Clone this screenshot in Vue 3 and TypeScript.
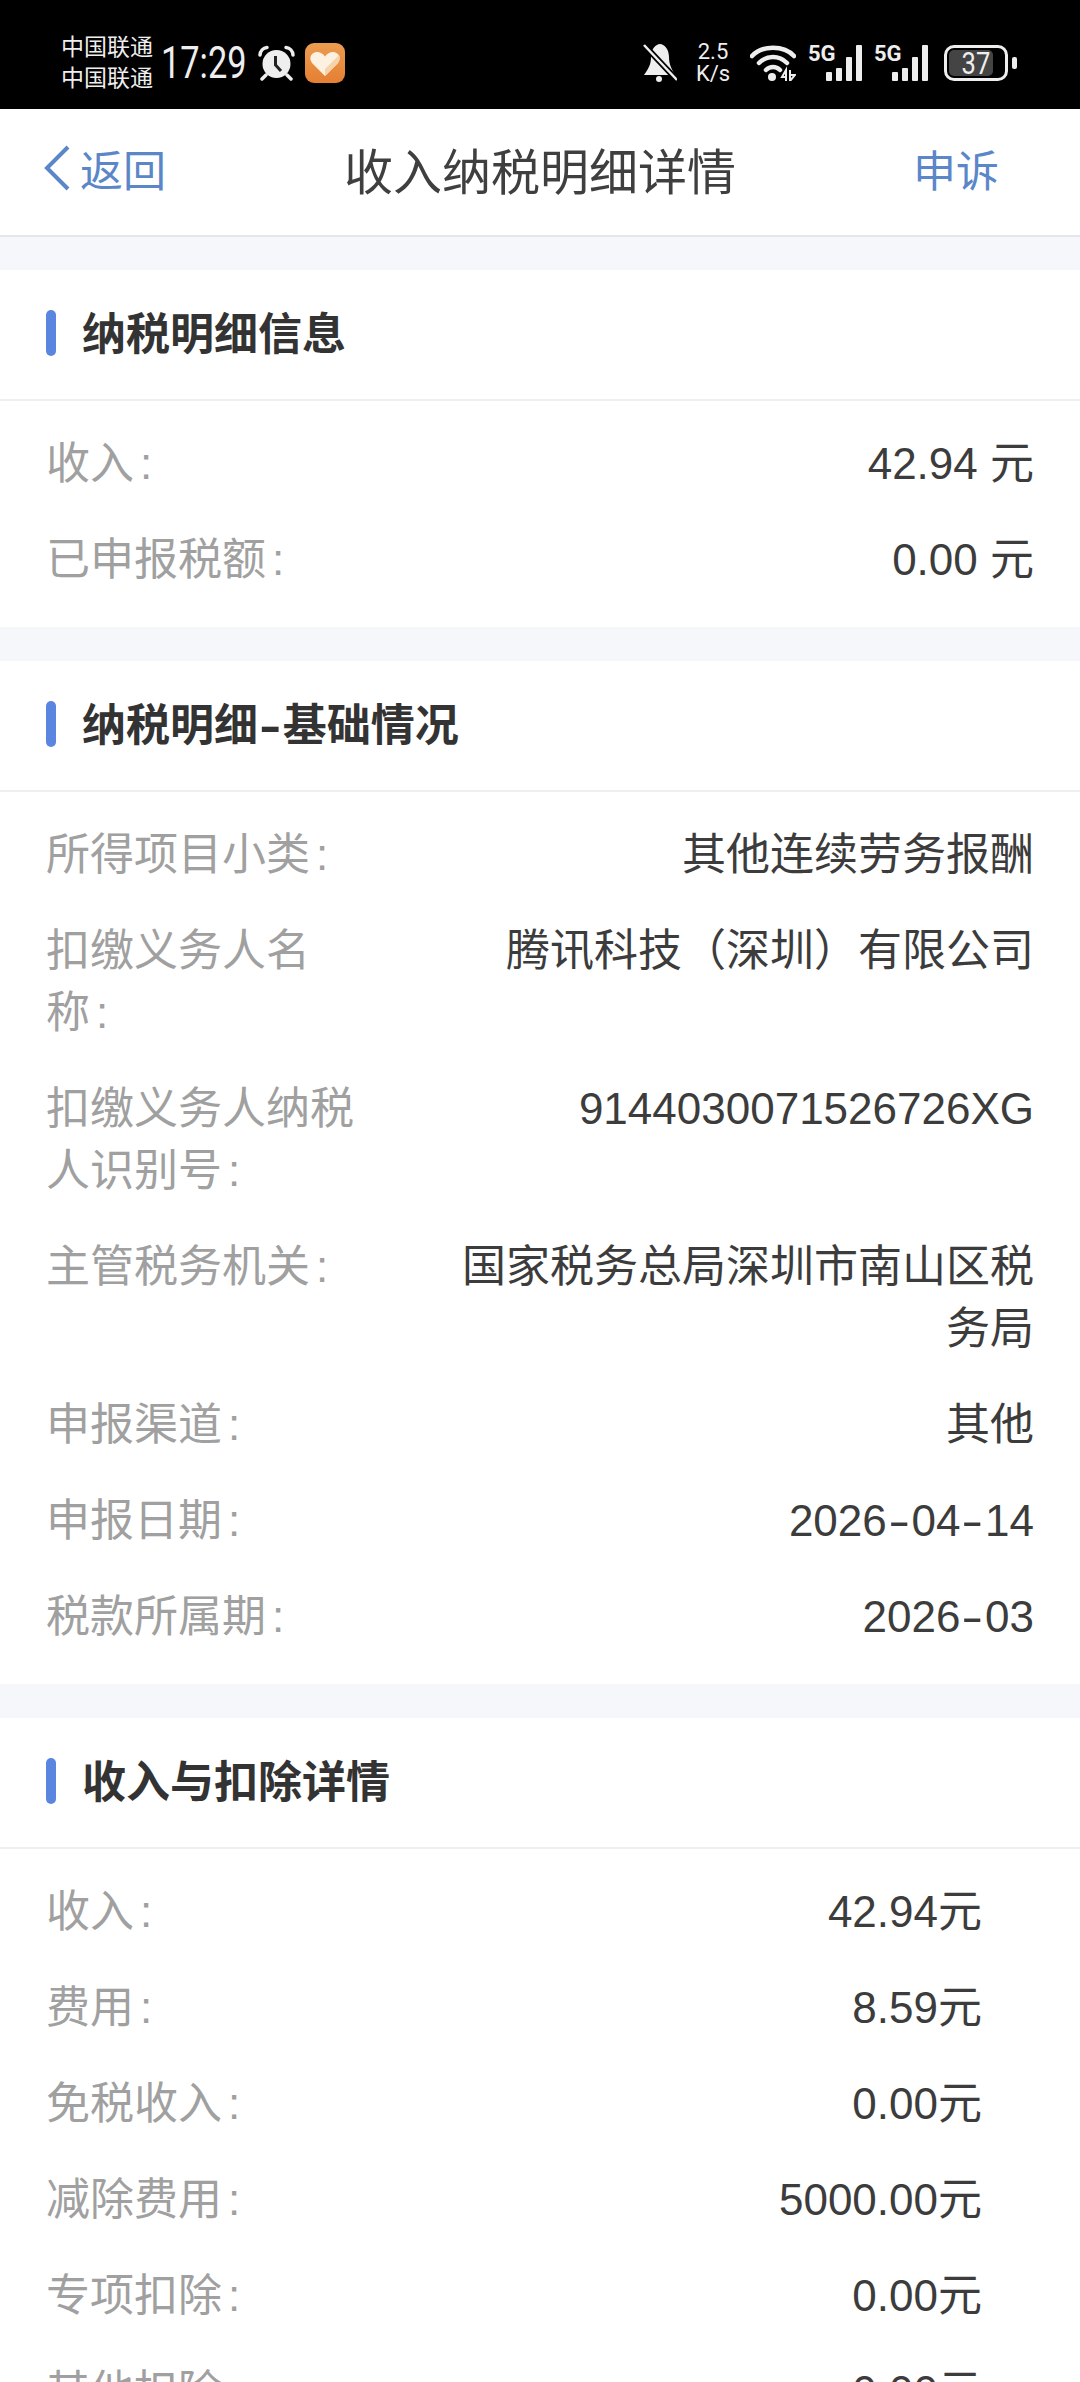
<template>
  <div class="page">
    <header class="status-bar">
      <div class="status-left">
        <div class="carrier">
          <span>中国联通</span>
          <span>中国联通</span>
        </div>
        <span class="clock"><span class="clock-text">17:29</span></span>
        <svg class="alarm" viewBox="0 0 37 36" width="37" height="36">
          <circle cx="18.500" cy="19" r="14" fill="#eee" />
          <path d="M2 10 A8 8 0 0 1 9 2.500 M35 10 A8 8 0 0 0 28 2.500" fill="none" stroke="#eee" stroke-width="3.500" stroke-linecap="round" />
          <path d="M8 30 L4 34 M29 30 L33 34" stroke="#eee" stroke-width="3.500" stroke-linecap="round" />
          <path d="M17.500 11 V20 L23 26" fill="none" stroke="#222" stroke-width="3" />
        </svg>
        <svg class="health" viewBox="0 0 40 40" width="40" height="40">
          <defs>
            <linearGradient id="hg" x1="0" y1="0" x2="0" y2="1">
              <stop offset="0" stop-color="#ec9c50" />
              <stop offset="1" stop-color="#e57f33" />
            </linearGradient>
          </defs>
          <rect width="40" height="40" rx="9" fill="url(#hg)" />
          <path d="M20 33 L7 20 C3 14 7 9 12 9 C15 9 18 10.500 20 13.500 C22 10.500 25 9 28 9 C33 9 37 14 33 20 Z" fill="#fdf1e2" />
          <path d="M20 33 L33 20 C35 17 35.500 14 34 12 L20 26 Z" fill="#f6d3a8" />
        </svg>
      </div>
      <div class="status-right">
        <svg class="bell" viewBox="0 0 34 40" width="34" height="40">
          <path d="M17 1 C13 1 8 6 8 14 C8 21 6 25 1 32 H32 C28 25 26 21 26 14 C26 6 21 1 17 1 Z" fill="#eee" />
          <circle cx="16" cy="36" r="3" fill="#eee" />
          <path d="M1 2 L34 37" stroke="#000" stroke-width="6" />
          <path d="M1 2 L34 37" stroke="#eee" stroke-width="2.500" />
        </svg>
        <div class="speed">
          <span>2.5</span>
          <span>K/s</span>
        </div>
        <svg class="wifi" viewBox="0 0 46 36" width="46" height="36">
          <path d="M2 11 C12 0 34 0 44 11 M9 18 C17 10 29 10 37 18 M16 25 C20 21 26 21 30 25" fill="none" stroke="#eee" stroke-width="4.500" stroke-linecap="round" />
          <circle cx="22" cy="32" r="4" fill="#eee" />
          <path d="M36 36 V25 L32 32 H36 M40 25 V36 L45 30 H40" fill="none" stroke="#eee" stroke-width="2" />
        </svg>
        <div v-for="n in 2" :key="n" class="signal">
          <span class="net">5G</span>
          <i class="b1"></i><i class="b2"></i><i class="b3"></i><i class="b4"></i>
        </div>
        <div class="battery">
          <div class="battery-body">
            <span class="battery-fill"></span>
            <span class="battery-num">37</span>
          </div>
          <i class="battery-cap"></i>
        </div>
      </div>
    </header>

    <nav class="nav">
      <div class="nav-back">
        <svg viewBox="0 0 26 48" width="26" height="48">
          <path d="M24 3 L3 24 L24 45" fill="none" stroke="#5b87c9" stroke-width="4" />
        </svg>
        <span>返回</span>
      </div>
      <div class="nav-title">收入纳税明细详情</div>
      <div class="nav-action">申诉</div>
    </nav>

    <section v-for="s in sections" :key="s.title" class="card">
      <h2 class="card-head">
        <i class="mark"></i>
        <span class="head-text">
          <template v-for="(part, i) in s.title.split('-')" :key="i">
            <span v-if="i" class="dash">-</span>{{ part }}
          </template>
        </span>
      </h2>
      <div class="card-body" :class="{ inset: s.inset }">
        <div v-for="r in s.rows" :key="r.label" class="row">
          <div class="label">{{ r.label }}<span class="colon">:</span></div>
          <div class="value">
            <template v-for="(part, i) in r.value.split('-')" :key="i">
              <span v-if="i" class="dash">-</span>{{ part }}
            </template>
          </div>
        </div>
      </div>
    </section>
  </div>
</template>

<script setup lang="ts">
  interface Row {
    label: string
    value: string
  }

  interface Section {
    title: string
    inset?: boolean
    rows: Row[]
  }

  const sections: Section[] = [
    {
      title: '纳税明细信息',
      rows: [
        { label: '收入', value: '42.94 元' },
        { label: '已申报税额', value: '0.00 元' },
      ],
    },
    {
      title: '纳税明细-基础情况',
      rows: [
        { label: '所得项目小类', value: '其他连续劳务报酬' },
        { label: '扣缴义务人名称', value: '腾讯科技（深圳）有限公司' },
        { label: '扣缴义务人纳税人识别号', value: '9144030071526726XG' },
        { label: '主管税务机关', value: '国家税务总局深圳市南山区税务局' },
        { label: '申报渠道', value: '其他' },
        { label: '申报日期', value: '2026-04-14' },
        { label: '税款所属期', value: '2026-03' },
      ],
    },
    {
      title: '收入与扣除详情',
      inset: true,
      rows: [
        { label: '收入', value: '42.94元' },
        { label: '费用', value: '8.59元' },
        { label: '免税收入', value: '0.00元' },
        { label: '减除费用', value: '5000.00元' },
        { label: '专项扣除', value: '0.00元' },
        { label: '其他扣除', value: '0.00元' },
      ],
    },
  ]
</script>

<style>
  html,
  body {
    margin: 0;
    background: #f5f7fa;
    overflow: hidden;
  }
</style>

<style scoped>
  .page {
    height: 2382px;
    overflow: hidden;
    background: #f5f7fa;
    font-family: "Liberation Sans", "Noto Sans CJK SC", sans-serif;
  }

  .status-bar {
    height: 109px;
    box-sizing: border-box;
    background: #000;
    color: #eee;
    display: flex;
    justify-content: space-between;
    align-items: center;
    padding: 17px 63px 0 61px;
  }

  .status-left,
  .status-right {
    display: flex;
    align-items: center;
  }

  .carrier {
    display: flex;
    flex-direction: column;
    font-size: 23px;
    line-height: 31px;
  }

  .clock {
    width: 84px;
    margin-left: 8px;
    font-family: "Roboto", sans-serif;
    font-size: 44px;
    white-space: nowrap;
  }

  .clock-text {
    display: inline-block;
    transform: scaleX(0.78);
    transform-origin: left center;
  }

  .alarm {
    margin-left: 13px;
  }

  .health {
    margin-left: 10px;
  }

  .speed {
    display: flex;
    flex-direction: column;
    align-items: center;
    width: 30px;
    margin: 0 22px 0 21px;
    font-family: "Roboto", sans-serif;
    font-size: 22px;
    line-height: 22px;
  }

  .signal {
    position: relative;
    display: flex;
    align-items: flex-end;
    justify-content: flex-end;
    gap: 4px;
    width: 54px;
    height: 36px;
    margin-left: 12px;
  }

  .signal i {
    width: 6px;
    background: #eee;
    border-radius: 1px;
  }

  .net {
    position: absolute;
    left: 0;
    top: -1px;
    font-family: "Roboto", sans-serif;
    font-weight: 700;
    font-size: 22px;
    line-height: 20px;
  }

  .b1 { height: 9px; }
  .b2 { height: 13px; }
  .b3 { height: 24px; }
  .b4 { height: 36px; }

  .battery {
    display: flex;
    align-items: center;
    gap: 4px;
    margin-left: 16px;
  }

  .battery-body {
    position: relative;
    box-sizing: border-box;
    width: 64px;
    height: 36px;
    border: 3px solid #eee;
    border-radius: 10px;
    display: flex;
    align-items: center;
    justify-content: center;
  }

  .battery-fill {
    position: absolute;
    left: 2px;
    top: 2px;
    bottom: 2px;
    width: 44px;
    border-radius: 5px;
    background: #444;
  }

  .battery-num {
    position: relative;
    font-family: "Roboto", sans-serif;
    font-size: 32px;
    line-height: 30px;
    transform: scaleX(0.8);
  }

  .battery-cap {
    width: 5px;
    height: 12px;
    background: #eee;
    border-radius: 2px;
  }

  .nav {
    position: relative;
    height: 128px;
    box-sizing: border-box;
    background: #fff;
    border-bottom: 2px solid #e4e6e9;
    display: flex;
    align-items: center;
    justify-content: space-between;
    padding: 0 81px 8px 44px;
    margin-bottom: 33px;
  }

  .nav-back {
    display: flex;
    align-items: center;
    gap: 10px;
    color: #5b87c9;
    font-size: 43px;
  }

  .nav-title {
    position: absolute;
    left: 0;
    right: 0;
    text-align: center;
    font-size: 49px;
    color: #3f3f3f;
  }

  .nav-action {
    color: #5b87c9;
    font-size: 43px;
  }

  .card {
    background: #fff;
    margin-bottom: 34px;
  }

  .card-head {
    margin: 0;
    height: 131px;
    box-sizing: border-box;
    border-bottom: 2px solid #eeeff1;
    display: flex;
    align-items: center;
    gap: 26px;
    padding: 0 0 3px 46px;
    font-size: 44px;
    font-weight: 700;
    color: #333;
  }

  .head-text {
    padding-bottom: 4px;
  }

  .mark {
    width: 10px;
    height: 46px;
    border-radius: 5px;
    background: #5a86e0;
  }

  .dash {
    display: inline-block;
    padding: 0 5px;
    transform: scaleX(1.5);
  }

  .card-body {
    padding: 15px 46px 19px;
    display: flex;
    flex-direction: column;
  }

  .row {
    display: flex;
    justify-content: space-between;
    padding: 17px 0;
    font-size: 44px;
    line-height: 62px;
  }

  .label {
    width: 315px;
    flex: none;
    color: #a0a0a0;
  }

  .colon {
    margin-left: 6px;
  }

  .value {
    width: 590px;
    flex: none;
    text-align: right;
    color: #3c3c3c;
  }

  .inset .value {
    padding-right: 52px;
    box-sizing: border-box;
  }
</style>
